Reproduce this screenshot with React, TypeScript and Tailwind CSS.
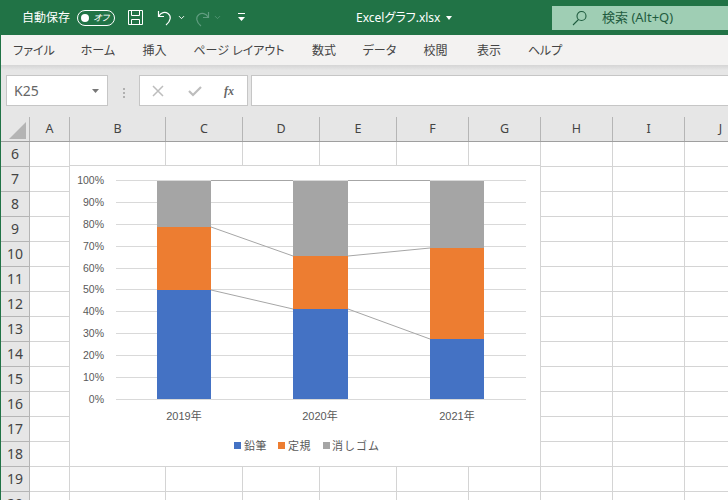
import { ChevronDown } from 'lucide-react';

const COLS = [
  { name: 'A', w: 40 },
  { name: 'B', w: 96 },
  { name: 'C', w: 77 },
  { name: 'D', w: 77 },
  { name: 'E', w: 77 },
  { name: 'F', w: 72 },
  { name: 'G', w: 72 },
  { name: 'H', w: 72 },
  { name: 'I', w: 72 },
  { name: 'J', w: 72 },
];
const ROWS = [6, 7, 8, 9, 10, 11, 12, 13, 14, 15, 16, 17, 18, 19, 20];
const TABS = [
  { label: 'ファイル', w: 'w-[64px]' },
  { label: 'ホーム', w: 'w-[64px]' },
  { label: '挿入', w: 'w-[49px]' },
  { label: 'ページ レイアウト', w: 'w-[120px]' },
  { label: '数式', w: 'w-[50px]' },
  { label: 'データ', w: 'w-[61px]' },
  { label: '校閲', w: 'w-[51px]' },
  { label: '表示', w: 'w-[56px]' },
  { label: 'ヘルプ', w: 'w-[56px]' },
];
const FONT = "font-['Noto_Sans','Noto_Sans_CJK_JP',sans-serif]";
const GRID_ROWS = [180, 202, 224, 246, 268, 289, 311, 333, 355, 377, 399];

const BARS = [
  { x: 87, w: 54, label: '2019年', blue: 290, orange: 227 },
  { x: 223, w: 55, label: '2020年', blue: 309, orange: 256 },
  { x: 360, w: 54, label: '2021年', blue: 339, orange: 248 },
];

// chart is placed at x=70, y=166 (inside its border)
const Chart = () => {
  const y = (v: number) => v - 166;
  return (
    <svg width="472" height="302" className="absolute left-[-1px] top-[-1px] bg-white border border-[#d4d4d4]" fontFamily="'Liberation Sans','Noto Sans CJK JP',sans-serif">
      {GRID_ROWS.map((row, i) => (
        <g key={row}>
          <line x1="46" x2="456" y1={y(row) + 0.5} y2={y(row) + 0.5} stroke="#d9d9d9" />
          <text x="34" y={y(row) + 4} textAnchor="end" fontSize="10.5" fill="#595959">{100 - i * 10}%</text>
        </g>
      ))}
      {BARS.map((b) => (
        <g key={b.x}>
          <rect x={b.x} y={15} width={b.w} height={y(b.orange) - 15} fill="#a5a5a5" />
          <rect x={b.x} y={y(b.orange)} width={b.w} height={y(b.blue) - y(b.orange)} fill="#ed7d31" />
          <rect x={b.x} y={y(b.blue)} width={b.w} height={233 - y(b.blue)} fill="#4472c4" />
          <text x={b.x + 27} y="254" textAnchor="middle" fontSize="11" fill="#595959">{b.label}</text>
        </g>
      ))}
      <g stroke="#a6a6a6" strokeWidth="1" fill="none">
        <line x1="141" y1={y(290)} x2="223" y2={y(309)} />
        <line x1="278" y1={y(309)} x2="360" y2={y(339)} />
        <line x1="141" y1={y(227)} x2="223" y2={y(256)} />
        <line x1="278" y1={y(256)} x2="360" y2={y(248)} />
        <line x1="141" y1="14.5" x2="223" y2="14.5" />
        <line x1="278" y1="14.5" x2="360" y2="14.5" />
      </g>
      <rect x="164" y="276" width="7" height="7" fill="#4472c4" />
      <text x="174" y="284" fontSize="11" letterSpacing="0.5" fill="#595959">鉛筆</text>
      <rect x="208" y="276" width="7" height="7" fill="#ed7d31" />
      <text x="218" y="284" fontSize="11" letterSpacing="0.5" fill="#595959">定規</text>
      <rect x="253" y="276" width="7" height="7" fill="#a5a5a5" />
      <text x="262" y="284" fontSize="11" letterSpacing="1" fill="#595959">消しゴム</text>
    </svg>
  );
};

export default function App() {
  return (
    <div className={`w-[728px] h-[500px] overflow-hidden bg-white flex flex-col ${FONT}`}>
      <div className="h-[35px] shrink-0 bg-[#217346] flex items-center text-white text-[12px]">
        <span className="ml-[22px]">自動保存</span>
        <div className="ml-[7px] w-[38px] h-[16px] rounded-full border border-white flex items-center justify-between px-[3px]">
          <span className="w-[8px] h-[8px] rounded-full bg-white" />
          <span className="text-[9px] italic mr-[2px] [font-feature-settings:'palt']">オフ</span>
        </div>
        <svg width="17" height="17" viewBox="0 0 17 17" className="ml-[12px]" fill="none" stroke="white">
          <path d="M1.5 1.5H15.5V15.5H1.5Z M4.5 1.5V6.5H12.5V1.5 M4.5 15.5V10.5H12.5V15.5" />
        </svg>
        <svg width="18" height="18" viewBox="0 0 18 18" className="ml-[13px]" fill="none" stroke="white" strokeWidth="1.2">
          <path d="M1.5 2V7.5H7 M2 7C4 3.5 8 2.5 11 4.5C14.5 7 14 12 9 16" />
        </svg>
        <ChevronDown size={9} strokeWidth={2.5} className="ml-[2px] text-white" />
        <svg width="18" height="18" viewBox="0 0 18 18" className="ml-[7px]" fill="none" stroke="#5f9c7f" strokeWidth="1.2">
          <path d="M15.5 3V8.5H10 M15 8C13 4.5 9 3.5 6 5.5C2.5 8 3 13 8 17" />
        </svg>
        <ChevronDown size={9} strokeWidth={2} className="ml-[2px] text-[#5f9c7f]" />
        <svg width="9" height="9" viewBox="0 0 9 9" className="ml-[15px]" fill="white">
          <rect x="1" y="0" width="7" height="1" />
          <path d="M1 4H8L4.5 8Z" />
        </svg>
        <span className="w-[90px] ml-[110px] [font-feature-settings:'palt'] whitespace-nowrap">Excelグラフ.xlsx</span>
        <svg width="6" height="4" viewBox="0 0 6 4" fill="white"><path d="M0 0H6L3 4Z" /></svg>
        <div className="ml-[100px] flex-1 h-[24px] self-start mt-[6px] bg-[#9fceb4] flex items-center text-[#1f5c3f] text-[13px]">
          <svg width="16" height="16" viewBox="0 0 16 16" className="ml-[20px]" fill="none" stroke="#1f5c3f" strokeWidth="1.1">
            <circle cx="9.5" cy="6" r="4.5" /><path d="M6.5 9.5L1 15" />
          </svg>
          <span className="ml-[14px]">検索 (Alt+Q)</span>
        </div>
      </div>
      <div className="h-[30px] shrink-0 bg-[#f3f2f1] flex items-center pl-[1px] pt-[2px] text-[12px] text-[#444444] border-l border-[#217346] [font-feature-settings:'palt']">
        {TABS.map((t) => (
          <span key={t.label} className={`${t.w} text-center`}>{t.label}</span>
        ))}
      </div>
      <div className="h-[52px] shrink-0 bg-[linear-gradient(#d5d5d5,#e6e6e6_5px)] flex pt-[10px] pl-[5px] border-l border-[#217346]">
        <div className="w-[102px] h-[31px] bg-white border border-[#c6c6c6] flex items-center justify-between pl-[7px] pr-[8px] text-[14px] text-[#666666]">
          <span>K25</span>
          <svg width="7" height="4" viewBox="0 0 7 4" fill="#777777"><path d="M0 0H7L3.5 4Z" /></svg>
        </div>
        <div className="w-[31px] flex flex-col items-center justify-center gap-[2px] mb-[6px]">
          <span className="w-[2px] h-[2px] bg-[#b0b0b0]" />
          <span className="w-[2px] h-[2px] bg-[#b0b0b0]" />
          <span className="w-[2px] h-[2px] bg-[#b0b0b0]" />
        </div>
        <div className="w-[109px] h-[31px] bg-white border border-[#c6c6c6] flex items-center">
          <svg width="12" height="12" viewBox="0 0 12 12" className="ml-[12px]" stroke="#bdbdbd" strokeWidth="1.5"><path d="M1 1L11 11M11 1L1 11" /></svg>
          <svg width="14" height="12" viewBox="0 0 14 12" className="ml-[24px]" fill="none" stroke="#bdbdbd" strokeWidth="2.2"><path d="M1 6L5 10L13 2" /></svg>
          <span className="ml-[22px] text-[12px] italic font-bold text-[#666666] font-['Liberation_Serif',serif]">fx</span>
        </div>
        <div className="ml-[3px] flex-1 h-[31px] bg-white border border-[#c6c6c6] border-r-0" />
      </div>
      <div className="flex-1 flex flex-col border-l border-[#217346] overflow-hidden">
        <div className="h-[24px] shrink-0 flex bg-[#e6e6e6] border-b border-[#9f9f9f] text-[12.5px] text-[#444444] box-content">
          <div className="w-[29px] shrink-0 border-r border-[#b5b5b5] flex items-end justify-end pr-[3px] pb-[2px]">
            <svg width="17" height="17" viewBox="0 0 17 17" fill="#b4b4b4"><path d="M17 0V17H0Z" /></svg>
          </div>
          {COLS.map((c) => (
            <div key={c.name} style={{ width: c.w }} className="shrink-0 border-r border-[#b5b5b5] text-center leading-[24px]">{c.name}</div>
          ))}
        </div>
        <div className="relative flex-1">
          {ROWS.map((r) => (
            <div key={r} className="h-[25px] flex">
              <div className="w-[29px] shrink-0 bg-[#e6e6e6] border-r border-b border-[#b5b5b5] text-center text-[14px] text-[#444444] leading-[24px]">{r}</div>
              {COLS.map((c) => (
                <div key={c.name} style={{ width: c.w }} className="shrink-0 border-r border-b border-[#d4d4d4]" />
              ))}
            </div>
          ))}
          <div className="absolute left-[69px] top-[24px] w-[471px] h-[300px]">
            <Chart />
          </div>
        </div>
      </div>
    </div>
  );
}
